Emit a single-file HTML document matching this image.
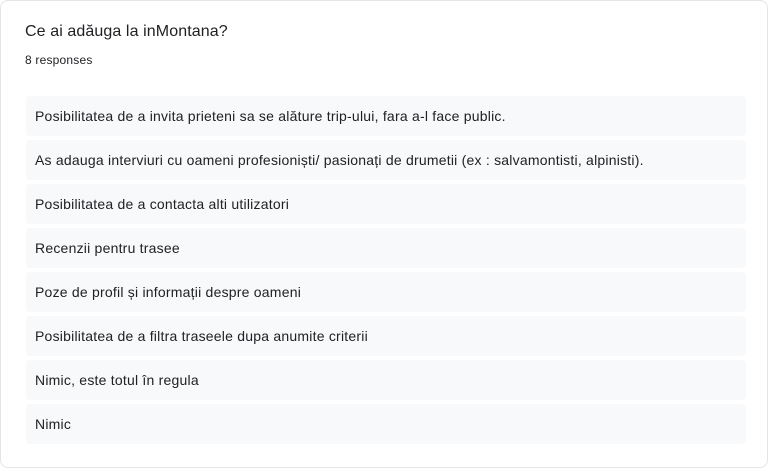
<!DOCTYPE html>
<html><head><style>
html,body{margin:0;padding:0;width:768px;height:468px;background:#fff;overflow:hidden}
.card{position:absolute;left:0;top:0;width:766px;height:466px;border:1px solid #e3e5e8;border-radius:8px;background:#fff;font-family:"Liberation Sans",Roboto,sans-serif;color:#202124}
.t{position:absolute;left:24px;top:22px;font-size:16px;letter-spacing:0.1px}
.s{position:absolute;left:24px;top:52px;font-size:12px;letter-spacing:0.2px}
.r{position:absolute;left:25px;width:720px;height:40px;background:#f8f9fa;border-radius:4px;font-size:14px;line-height:40px;padding-left:9px;box-sizing:border-box;letter-spacing:0.22px}
</style></head><body><div class="card">
<div class="t">Ce ai adăuga la inMontana?</div>
<div class="s">8 responses</div>
<div class="r" style="top:95px">Posibilitatea de a invita prieteni sa se alăture trip-ului, fara a-l face public.</div>
<div class="r" style="top:139px">As adauga interviuri cu oameni profesioniști/ pasionați de drumetii (ex : salvamontisti, alpinisti).</div>
<div class="r" style="top:183px">Posibilitatea de a contacta alti utilizatori</div>
<div class="r" style="top:227px">Recenzii pentru trasee</div>
<div class="r" style="top:271px">Poze de profil și informații despre oameni</div>
<div class="r" style="top:315px">Posibilitatea de a filtra traseele dupa anumite criterii</div>
<div class="r" style="top:359px">Nimic, este totul în regula</div>
<div class="r" style="top:403px">Nimic</div>
</div></body></html>
